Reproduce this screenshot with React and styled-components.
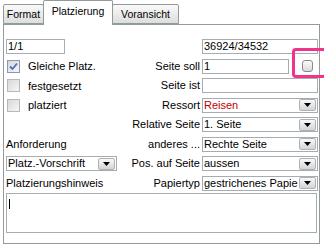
import React from "react";
import styled, { createGlobalStyle } from "styled-components";

const Global = createGlobalStyle`
  body {
    margin: 0;
    background: #ffffff;
    font-family: "Liberation Sans", Arial, sans-serif;
    font-size: 11px;
    color: #000000;
  }
`;

const Window = styled.div`
  width: 324px;
  height: 244px;
  padding: 0 4px 0 3px;
  box-sizing: border-box;
  position: relative;
  overflow: hidden;
`;

const TabBar = styled.div`
  display: flex;
  align-items: flex-end;
  height: 24px;
  position: relative;
  z-index: 1;
`;

const Tab = styled.div`
  box-sizing: border-box;
  width: ${p => p.$w};
  border: 1px solid #919b9c;
  border-bottom: ${p => (p.$active ? "none" : "1px solid #919b9c")};
  border-radius: 2px 2px 0 0;
  background: ${p =>
    p.$active ? "#ffffff" : "linear-gradient(#fafafa, #e8e8e8 60%, #dedede)"};
  height: ${p => (p.$active ? "25px" : "20px")};
  margin: ${p => (p.$active ? "0 -1px -1px" : "0")};
  padding-top: ${p => (p.$active ? "4px" : "3px")};
  text-align: center;
  font-size: 10.5px;
  white-space: nowrap;
`;

const Panel = styled.div`
  box-sizing: border-box;
  height: 220px;
  border: 1px solid #919b9c;
  background: #ffffff;
  padding: 14px 1px 0 2px;
`;

const Form = styled.div`
  display: grid;
  grid-template-columns: 112px 80px 116px;
  grid-auto-rows: 15px;
  column-gap: 2px;
  row-gap: 4.5px;
  align-items: center;
`;

const Label = styled.div`
  white-space: nowrap;
  text-align: ${p => (p.$right ? "right" : "left")};
  line-height: 15px;
`;

const Input = styled.div`
  box-sizing: border-box;
  height: 15px;
  width: ${p => p.$w || "100%"};
  border: 1px solid #a5acb2;
  background: #ffffff;
  padding: 0 1px;
  line-height: 13px;
  white-space: nowrap;
  overflow: hidden;
  flex: ${p => (p.$grow ? 1 : "none")};
`;

const FieldRow = styled.div`
  display: flex;
  align-items: center;
  gap: 13px;
`;

const SmallButton = styled.div`
  width: 11px;
  height: 12px;
  box-sizing: border-box;
  border: 1px solid #8a8a8a;
  border-radius: 3px;
  background: linear-gradient(#fdfdfd, #d8d8d8);
  margin-right: 5px;
`;

const Select = styled.div`
  box-sizing: border-box;
  height: 15px;
  width: ${p => p.$w || "100%"};
  border: 1px solid #a5acb2;
  background: #ffffff;
  display: flex;
  align-items: center;
  gap: 1px;
  padding: 0 1px;
`;

const SelectText = styled.div`
  flex: 1;
  min-width: 0;
  white-space: nowrap;
  color: ${p => p.$color || "#000000"};
  line-height: 13px;
`;

const DropButton = styled.div`
  box-sizing: border-box;
  width: 17px;
  height: 12px;
  border: 1px solid #aeb2b6;
  border-radius: 2px;
  background: linear-gradient(#f9f9f9, #d4d4d4);
  display: flex;
  align-items: center;
  justify-content: center;
  flex: none;
`;

const Check = styled.div`
  box-sizing: border-box;
  width: 13px;
  height: 13px;
  border: 1px solid ${p => (p.$on ? "#8c98b0" : "#b8b8b8")};
  background: linear-gradient(135deg, #d8d8d8, #f6f6f6);
  display: flex;
  align-items: center;
  justify-content: center;
  flex: none;
`;

const CheckRow = styled.div`
  display: flex;
  align-items: center;
  gap: 8px;
  padding-left: 1px;
  white-space: nowrap;
`;

const NoteArea = styled.div`
  box-sizing: border-box;
  height: 40px;
  margin-top: 2px;
  width: 311px;
  border: 1px solid #a5acb2;
  padding: 5px 2px;
`;

const Caret = styled.div`
  width: 1px;
  height: 10px;
  background: #000000;
`;

const Highlight = styled.div`
  position: absolute;
  left: 292px;
  top: 48px;
  width: 35px;
  height: 30px;
  box-sizing: border-box;
  border: 3px solid #f0348a;
  border-radius: 4px;
  pointer-events: none;
`;

const Arrow = () => (
  <svg width="7" height="4" viewBox="0 0 7 4">
    <path d="M0 0 H7 L3.5 4 Z" fill="#000" />
  </svg>
);

const Tick = () => (
  <svg width="9" height="9" viewBox="0 0 9 9">
    <path d="M1 4.5 L3.5 7 L8 1.5" fill="none" stroke="#4a6fc0" strokeWidth="1.8" />
  </svg>
);

const Dropdown = ({ value, color, w }) => (
  <Select $w={w}>
    <SelectText $color={color}>{value}</SelectText>
    <DropButton>
      <Arrow />
    </DropButton>
  </Select>
);

const CheckField = ({ checked, label }) => (
  <CheckRow>
    <Check $on={checked}>{checked && <Tick />}</Check>
    {label}
  </CheckRow>
);

const App = () => (
  <Window>
    <Global />
    <TabBar>
      <Tab $w="41px">Format</Tab>
      <Tab $active $w="70px">Platzierung</Tab>
      <Tab $w="67px">Voransicht</Tab>
    </TabBar>
    <Panel>
      <Form>
        <Input $w="59px">1/1</Input>
        <div />
        <Input>36924/34532</Input>

        <CheckField checked label="Gleiche Platz." />
        <Label $right>Seite soll</Label>
        <FieldRow>
          <Input $grow>1</Input>
          <SmallButton />
        </FieldRow>

        <CheckField label="festgesetzt" />
        <Label $right>Seite ist</Label>
        <Input />

        <CheckField label="platziert" />
        <Label $right>Ressort</Label>
        <Dropdown value="Reisen" color="#c00000" />

        <div />
        <Label $right>Relative Seite</Label>
        <Dropdown value="1. Seite" />

        <Label>Anforderung</Label>
        <Label $right>anderes ...</Label>
        <Dropdown value="Rechte Seite" />

        <Dropdown value="Platz.-Vorschrift" w="111px" />
        <Label $right>Pos. auf Seite</Label>
        <Dropdown value="aussen" />

        <Label>Platzierungshinweis</Label>
        <Label $right>Papiertyp</Label>
        <Dropdown value="gestrichenes Papie" />
      </Form>
      <NoteArea>
        <Caret />
      </NoteArea>
    </Panel>
    <Highlight />
  </Window>
);

export default App;
